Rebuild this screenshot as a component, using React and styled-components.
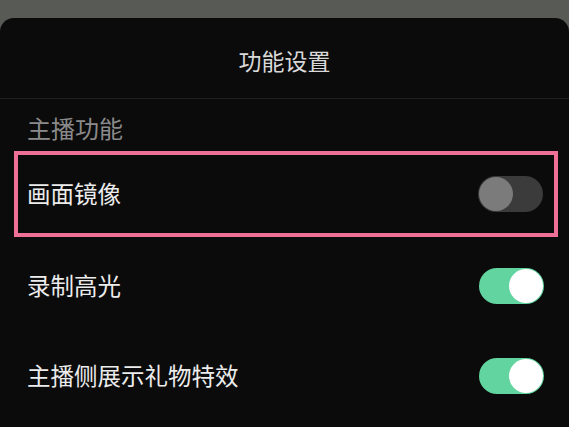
import styled, { createGlobalStyle } from 'styled-components';

const Global = createGlobalStyle`
  html, body { margin: 0; padding: 0; background: #585a55; }
  body { font-family: "Noto Sans CJK SC", "Noto Sans", sans-serif; }
`;

const Page = styled.div`
  width: 569px; height: 427px; overflow: hidden;
  padding-top: 18px; box-sizing: border-box;
`;
const Sheet = styled.div`
  background: #0b0b0b; height: 100%;
  border-radius: 14px 14px 0 0;
`;
const Header = styled.div`
  height: 81px; box-sizing: border-box; padding-top: 27px;
  text-align: center; color: #d9d9d9; font-size: 23px; line-height: 30px;
  border-bottom: 1px solid #1f1f1f;
`;
const Section = styled.div`
  padding: 14px 27px 8px; color: #8a8a8a; font-size: 24px; line-height: 30px;
`;
const Row = styled.div`
  display: flex; align-items: center; justify-content: space-between;
  box-sizing: border-box;
  height: ${({ $hl }) => ($hl ? '86px' : '90px')};
  margin: ${({ $hl }) => ($hl ? '0 11px 4px 14px' : '0')};
  padding: ${({ $hl }) => ($hl ? '0 11px 0 9px' : '0 25px 0 27px')};
  border: ${({ $hl }) => ($hl ? '4px solid #ee7096' : 'none')};
  color: #ececec; font-size: 23.5px;
`;
const Label = styled.span`line-height: 30px; margin-top: -2px;`;
const Track = styled.div`
  width: 65px; height: 36px; border-radius: 18px; position: relative;
  background: ${({ $on }) => ($on ? '#62d49f' : '#3b3b3b')};
`;
const Knob = styled.div`
  position: absolute; top: 1px; width: 34px; height: 34px; border-radius: 50%;
  left: ${({ $on }) => ($on ? '30px' : '1px')};
  background: ${({ $on }) => ($on ? '#ffffff' : '#7b7b7b')};
`;

const Toggle = ({ on }) => (
  <Track $on={on}><Knob $on={on} /></Track>
);

const items = [
  { label: '画面镜像', on: false, hl: true },
  { label: '录制高光', on: true },
  { label: '主播侧展示礼物特效', on: true },
];

export default function App() {
  return (
    <Page>
      <Global />
      <Sheet>
        <Header>功能设置</Header>
        <Section>主播功能</Section>
        {items.map((it) => (
          <Row key={it.label} $hl={it.hl}>
            <Label>{it.label}</Label>
            <Toggle on={it.on} />
          </Row>
        ))}
      </Sheet>
    </Page>
  );
}
